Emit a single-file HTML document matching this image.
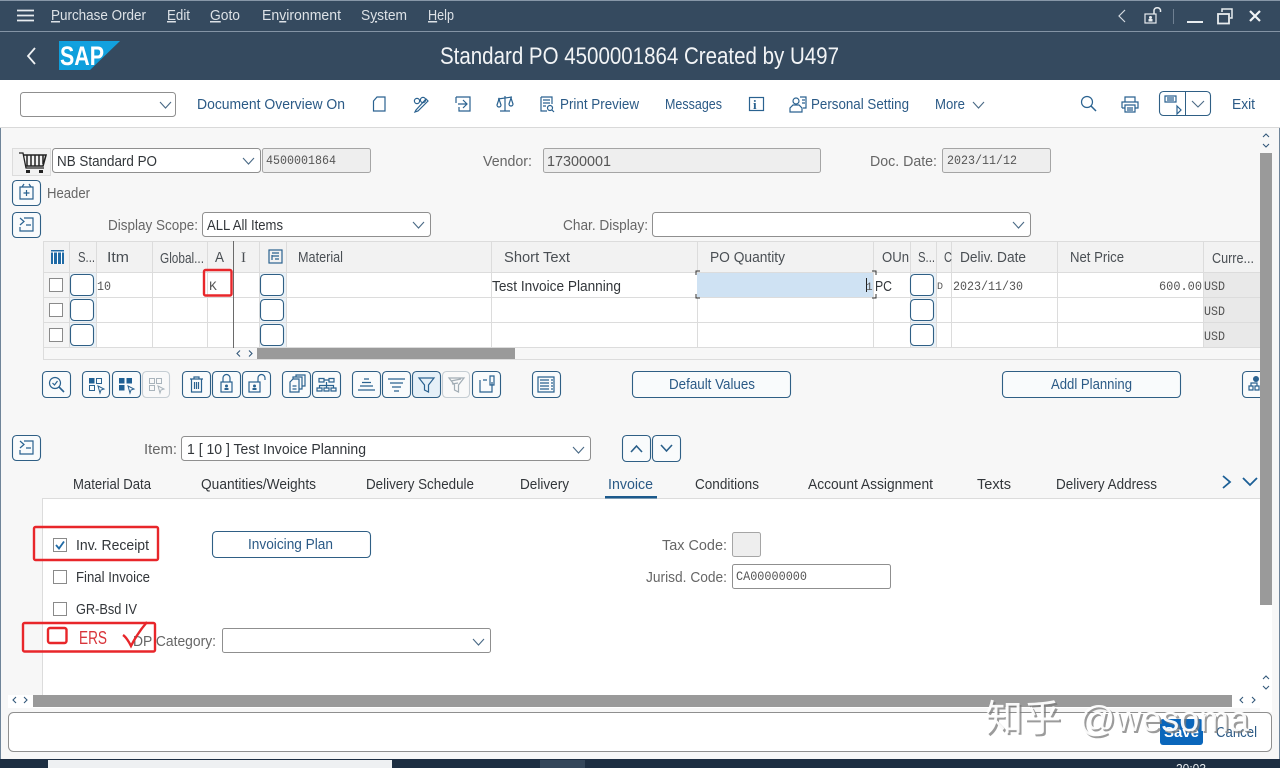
<!DOCTYPE html>
<html><head><meta charset="utf-8"><title>Standard PO</title>
<style>
html,body{margin:0;padding:0;background:#f7f7f7;overflow:hidden}
svg{display:block;position:absolute;left:0;top:0}
text{font-family:"Liberation Sans","Noto Sans CJK SC",sans-serif;font-size:15px;fill:#32363a}
.m{fill:#dde2e7}
.b{fill:#2b5a86}
.l{fill:#666}
.h{fill:#4a4f54}
.c{font-family:"Liberation Mono",monospace;font-size:13px;fill:#555}
.btn{fill:#fff;stroke:#2f5f85;stroke-width:1.1}
.bt2{fill:#f9fbfc;stroke:#2f5f85;stroke-width:1.1}
.dis{fill:#f9f9f9;stroke:#c5cdd3;stroke-width:1.1}
.dd{fill:#fff;stroke:#8f8f8f;stroke-width:1}
.ro{fill:#eeeeee;stroke:#a5a5a5;stroke-width:1}
.ck{fill:#fff;stroke:#8a8a8a;stroke-width:1}
.i{fill:none;stroke:#2a6290;stroke-width:1.2}
.chev{fill:none;stroke:#4a6a86;stroke-width:1.1}
.red{fill:none;stroke:#e8262a;stroke-width:2.4}
.grid{stroke:#dcdcdc;stroke-width:1}
.ar{fill:none;stroke:#33587a;stroke-width:1.1}
</style></head><body>
<svg width="1280" height="768" viewBox="0 0 1280 768" xmlns="http://www.w3.org/2000/svg">
<rect width="1280" height="768" fill="#f7f7f7"/>
<!-- shell -->
<rect width="1280" height="80" fill="#354a5f"/>
<rect width="1280" height="1" fill="#8797a8"/>
<rect y="31" width="1280" height="1" fill="#8494a5"/>
<rect x="0" y="80" width="1" height="680" fill="#6f8499"/>
<rect x="1279" y="80" width="1" height="680" fill="#6f8499"/>
<path d="M17 10.500H34M17 15.500H34M17 20.500H34" stroke="#e8ecef" stroke-width="1.800" fill="none"/>
<text class="m" x="51" y="20" textLength="95" lengthAdjust="spacingAndGlyphs"><tspan style="text-decoration:underline">P</tspan>urchase Order</text>
<text class="m" x="167" y="20" textLength="23" lengthAdjust="spacingAndGlyphs"><tspan style="text-decoration:underline">E</tspan>dit</text>
<text class="m" x="210" y="20" textLength="30" lengthAdjust="spacingAndGlyphs"><tspan style="text-decoration:underline">G</tspan>oto</text>
<text class="m" x="262" y="20" textLength="79" lengthAdjust="spacingAndGlyphs">En<tspan style="text-decoration:underline">v</tspan>ironment</text>
<text class="m" x="361" y="20" textLength="46" lengthAdjust="spacingAndGlyphs">S<tspan style="text-decoration:underline">y</tspan>stem</text>
<text class="m" x="428" y="20" textLength="26" lengthAdjust="spacingAndGlyphs"><tspan style="text-decoration:underline">H</tspan>elp</text>
<!-- window icons -->
<path d="M1125 10L1119 16L1125 22" fill="none" stroke="#d5dbe1" stroke-width="1.200"/>
<rect x="1145" y="14" width="11" height="9" fill="none" stroke="#e8ecef" stroke-width="1.200"/>
<circle cx="1150.500" cy="17.500" r="1.500" fill="#e8ecef"/><rect x="1148.500" y="19" width="4" height="2.500" fill="#e8ecef"/>
<path d="M1154 14V10A3.500 3.500 0 0 1 1160.500 10V12" fill="none" stroke="#e8ecef" stroke-width="1.500"/>
<rect x="1173" y="9" width="1" height="15" fill="#6f8092"/>
<rect x="1187" y="21" width="16" height="2" fill="#e8ecef"/>
<rect x="1218" y="14" width="11" height="9.500" fill="none" stroke="#e8ecef" stroke-width="1.800"/>
<path d="M1222 12V9H1232V18H1230" fill="none" stroke="#e8ecef" stroke-width="1.500"/>
<path d="M1250 11L1260 21M1260 11L1250 21" stroke="#f2f4f6" stroke-width="2.200" fill="none"/>
<!-- title bar -->
<path d="M35 48L28 56L35 64" fill="none" stroke="#f0f2f4" stroke-width="1.800"/>
<path d="M59 41H120L90 70H59Z" fill="#0f9fdc"/>
<path d="M59 41H120L104 56L59 41Z" fill="#17a6e3" opacity=".4"/>
<text x="60" y="65" textLength="44" lengthAdjust="spacingAndGlyphs" style="font-size:27px;font-weight:700;fill:#fff">SAP</text>
<text x="440" y="64" textLength="399" lengthAdjust="spacingAndGlyphs" style="font-size:24px;fill:#f2f4f6">Standard PO 4500001864 Created by U497</text>
<!-- toolbar -->
<rect y="80" width="1280" height="47" fill="#fff"/>
<rect y="127" width="1280" height="1" fill="#d9d9d9"/>
<rect x="20.500" y="92.500" width="155" height="24" rx="3" class="dd"/>
<path class="chev" d="M160 102L165.500 108L171 102"/>
<text class="b" x="197" y="109" textLength="148" lengthAdjust="spacingAndGlyphs">Document Overview On</text>
<path class="i" d="M373.500 101L377 97H385V111H373.500Z" stroke-width="1.500"/>
<g class="i"><circle cx="417" cy="101" r="2.600"/><circle cx="423" cy="100" r="2.600"/><path d="M416 110L426 99L428 101L418 111L415 112Z"/></g>
<g class="i"><path d="M456 97H470V111H459V107M456 97V103"/><path d="M458 104H467M463 100L467 104L463 108"/></g>
<g class="i"><path d="M505 96V111M500 111H510M498 99L512 97"/><path d="M497 105L499 99L501 105A2 2 0 0 1 497 105ZM509 104L511 98L513 104A2 2 0 0 1 509 104Z"/></g>
<g class="i"><path d="M541 97H552V104M541 97V111H547M543 100H550M543 103H550M543 106H546"/><circle cx="550" cy="108" r="2.500"/><path d="M552 110L554 112"/></g>
<text class="b" x="560" y="109" textLength="79" lengthAdjust="spacingAndGlyphs">Print Preview</text>
<text class="b" x="665" y="109" textLength="57" lengthAdjust="spacingAndGlyphs">Messages</text>
<rect x="749.500" y="97.500" width="14" height="13" class="i"/>
<text x="753" y="109" style="font-family:'Liberation Serif',serif;font-size:13px;font-weight:700;fill:#2a6290">i</text>
<g class="i"><circle cx="796" cy="101" r="3"/><path d="M790 112V108L793 105H799L802 108V112ZM800 97H806V108H803"/><path d="M802 100H805M802 103H805"/></g>
<text class="b" x="811" y="109" textLength="98" lengthAdjust="spacingAndGlyphs">Personal Setting</text>
<text class="b" x="935" y="109" textLength="30" lengthAdjust="spacingAndGlyphs">More</text>
<path class="chev" d="M973 102L978.500 108L984 102"/>
<g class="i"><circle cx="1087" cy="102" r="5.500"/><path d="M1091 106L1096 111" stroke-width="1.500"/></g>
<g class="i"><path d="M1125 102V97H1135V102M1122 108V102H1138V108H1135M1125 108H1122"/><path d="M1125 105H1135V112H1125ZM1127 108H1133M1127 110H1133"/></g>
<rect x="1159.500" y="91.500" width="51" height="24" rx="4" class="btn"/>
<path d="M1185.500 92V115" stroke="#2f5f85"/>
<g class="i"><path d="M1165 96H1176V102H1165ZM1167 98H1174M1167 100H1174"/><path d="M1177 106L1181 110L1177 114Z" stroke="#2a6290"/></g>
<path class="chev" d="M1192 101L1198 107L1204 101"/>
<text class="b" x="1232" y="109" textLength="23" lengthAdjust="spacingAndGlyphs">Exit</text>
<!-- header row -->
<rect x="12.500" y="148.500" width="38" height="27" fill="#f2f2f2" stroke="#dcdcdc"/>
<g fill="none" stroke="#222" stroke-width="1.300"><path d="M19 153H23L26 168H44"/><path d="M23 155H46L43 166H26" stroke-width="1.600"/><path d="M27 155V166M31 155V166M35 155V166M39 155V166M43 155V164" stroke-width="1.500"/></g>
<rect x="26" y="170" width="4" height="3" fill="#222"/><rect x="39" y="170" width="4" height="3" fill="#222"/>
<rect x="52.500" y="148.500" width="208" height="24" rx="3" class="dd"/>
<text x="57" y="166" textLength="100" lengthAdjust="spacingAndGlyphs">NB Standard PO</text>
<path class="chev" d="M243 158L248.500 164L254 158"/>
<rect x="262.500" y="148.500" width="108" height="24" rx="2" class="ro"/>
<text class="c" x="266" y="164" textLength="70" lengthAdjust="spacingAndGlyphs">4500001864</text>
<text class="l" x="483" y="166" textLength="49" lengthAdjust="spacingAndGlyphs">Vendor:</text>
<rect x="543.500" y="148.500" width="277" height="24" rx="2" class="ro"/>
<text class="c" x="547" y="166" textLength="64" lengthAdjust="spacingAndGlyphs" style="font-family:'Liberation Sans',sans-serif;font-size:15px">17300001</text>
<text class="l" x="870" y="166" textLength="67" lengthAdjust="spacingAndGlyphs">Doc. Date:</text>
<rect x="942.500" y="148.500" width="108" height="24" rx="2" class="ro"/>
<text class="c" x="947" y="164" textLength="70" lengthAdjust="spacingAndGlyphs">2023/11/12</text>
<!-- header buttons -->
<rect x="12.500" y="180.500" width="28" height="25" rx="4" class="bt2"/>
<g class="i"><path d="M20 187H33V199H20ZM26.500 190V196M23.500 193H29.500M22 187L24 184M31 187L29 184"/></g>
<text class="l" x="47" y="198" textLength="43" lengthAdjust="spacingAndGlyphs">Header</text>
<rect x="12.500" y="212.500" width="28" height="25" rx="4" class="bt2"/>
<g class="i"><path d="M20 218L24 221.500L20 225M24 218H33V231H20V227M26 225H31"/></g>
<text class="l" x="108" y="230" textLength="90" lengthAdjust="spacingAndGlyphs">Display Scope:</text>
<rect x="202.500" y="212.500" width="228" height="24" rx="3" class="dd"/>
<text x="207" y="230" textLength="76" lengthAdjust="spacingAndGlyphs">ALL All Items</text>
<path class="chev" d="M413 222L418.500 228L424 222"/>
<text class="l" x="563" y="230" textLength="85" lengthAdjust="spacingAndGlyphs">Char. Display:</text>
<rect x="652.500" y="212.500" width="378" height="24" rx="3" class="dd"/>
<path class="chev" d="M1013 222L1018.500 228L1024 222"/>
<!-- right scrollbar -->
<path class="ar" d="M1263 137L1266 134L1269 137M1263 144L1266 147L1269 144"/>
<rect x="1260" y="153" width="12" height="452" fill="#9a9a9a"/>
<!-- table -->
<rect x="43" y="241" width="1217" height="119" fill="#fff"/>
<rect x="43" y="241" width="1217" height="31" fill="#f2f2f2"/>
<rect x="43" y="273" width="26" height="75" fill="#f5f5f5"/>
<rect x="70" y="273" width="26" height="75" fill="#eaf2f8"/>
<rect x="260" y="273" width="26" height="75" fill="#eaf2f8"/>
<rect x="910" y="273" width="26" height="75" fill="#eaf2f8"/>
<rect x="1203" y="273" width="57" height="75" fill="#e9e9e9"/>
<rect x="43" y="348" width="1217" height="12" fill="#f7f7f7"/>
<path class="grid" d="M43 272.500H1260M43 297.500H1260M43 322.500H1260M43 347.500H1260M43 359.500H1260M43 241.500H1260M43.500 241V359"/>
<path class="grid" d="M69.500 241V348M96.500 241V348M152.500 241V348M207.500 241V348M259.500 241V348M286.500 241V348M491.500 241V348M697.500 241V348M873.500 241V348M910.500 241V348M936.500 241V348M951.500 241V348M1057.500 241V348M1203.500 241V348"/>
<rect x="233" y="241" width="1" height="107" fill="#6a6a6a"/>
<g><rect x="51" y="250" width="13" height="14" fill="#1f6aa5"/><path d="M53.500 252V264M57.500 252V264M61.500 252V264" stroke="#fff" stroke-width="1"/><rect x="51" y="251.500" width="13" height="1" fill="#fff"/></g>
<text class="h" x="78" y="262" textLength="17" lengthAdjust="spacingAndGlyphs">S...</text>
<text class="h" x="107" y="262" textLength="22" lengthAdjust="spacingAndGlyphs">Itm</text>
<text class="h" x="160" y="263" textLength="44" lengthAdjust="spacingAndGlyphs">Global...</text>
<text class="h" x="215" y="262" textLength="9" lengthAdjust="spacingAndGlyphs">A</text>
<text class="h" x="241" y="262" textLength="5" lengthAdjust="spacingAndGlyphs" style="font-family:'Liberation Serif',serif">I</text>
<g class="i"><rect x="269" y="250" width="13" height="13"/><path d="M272 253H279M272 256H279M275 259H279M272 255V260"/></g>
<text class="h" x="298" y="262" textLength="45" lengthAdjust="spacingAndGlyphs">Material</text>
<text class="h" x="504" y="262" textLength="66" lengthAdjust="spacingAndGlyphs">Short Text</text>
<text class="h" x="710" y="262" textLength="75" lengthAdjust="spacingAndGlyphs">PO Quantity</text>
<text class="h" x="882" y="262" textLength="27" lengthAdjust="spacingAndGlyphs">OUn</text>
<text class="h" x="918" y="262" textLength="17" lengthAdjust="spacingAndGlyphs">S...</text>
<text class="h" x="944" y="262" textLength="8" lengthAdjust="spacingAndGlyphs">C</text>
<text class="h" x="960" y="262" textLength="66" lengthAdjust="spacingAndGlyphs">Deliv. Date</text>
<text class="h" x="1070" y="262" textLength="54" lengthAdjust="spacingAndGlyphs">Net Price</text>
<text class="h" x="1212" y="263" textLength="42" lengthAdjust="spacingAndGlyphs">Curre...</text>
<!-- rows -->
<rect x="49.500" y="278.500" width="13" height="13" class="ck"/><rect x="49.500" y="303.500" width="13" height="13" class="ck"/><rect x="49.500" y="328.500" width="13" height="13" class="ck"/>
<rect x="70.500" y="274.500" width="23" height="21" rx="4" class="btn"/><rect x="70.500" y="299.500" width="23" height="21" rx="4" class="btn"/><rect x="70.500" y="324.500" width="23" height="21" rx="4" class="btn"/>
<rect x="260.500" y="274.500" width="23" height="21" rx="4" class="btn"/><rect x="260.500" y="299.500" width="23" height="21" rx="4" class="btn"/><rect x="260.500" y="324.500" width="23" height="21" rx="4" class="btn"/>
<rect x="910.500" y="274.500" width="23" height="21" rx="4" class="btn"/><rect x="910.500" y="299.500" width="23" height="21" rx="4" class="btn"/><rect x="910.500" y="324.500" width="23" height="21" rx="4" class="btn"/>
<text class="c" x="97" y="290" textLength="14" lengthAdjust="spacingAndGlyphs">10</text>
<text class="c" x="209" y="290">K</text>
<rect x="204" y="270" width="27.500" height="25.500" rx="1.500" class="red"/>
<text x="492" y="291" textLength="129" lengthAdjust="spacingAndGlyphs">Test Invoice Planning</text>
<rect x="697" y="273" width="176" height="24" fill="#cfe2f3"/>
<path d="M700 271H696V275M872 271H876V275M700 298H696V294M872 298H876V294" fill="none" stroke="#333" stroke-width="1"/>
<rect x="866" y="278" width="1" height="14" fill="#222"/><text class="c" x="866" y="290" style="font-size:11px">1</text>
<text x="875" y="291" textLength="17" lengthAdjust="spacingAndGlyphs">PC</text>
<text class="c" x="937" y="289" style="font-size:10px">D</text>
<text class="c" x="953" y="290" textLength="70" lengthAdjust="spacingAndGlyphs">2023/11/30</text>
<text class="c" x="1159" y="290" textLength="43" lengthAdjust="spacingAndGlyphs">600.00</text>
<text class="c" x="1204" y="290" textLength="21" lengthAdjust="spacingAndGlyphs">USD</text>
<text class="c" x="1204" y="315" textLength="21" lengthAdjust="spacingAndGlyphs">USD</text>
<text class="c" x="1204" y="340" textLength="21" lengthAdjust="spacingAndGlyphs">USD</text>
<path class="ar" d="M240 350.500L237 353.500L240 356.500M249 350.500L252 353.500L249 356.500"/>
<rect x="257" y="348" width="258" height="11" fill="#9a9a9a"/>
<!-- button row -->
<rect x="42.500" y="371.500" width="28" height="26" rx="4" class="bt2"/>
<g class="i"><circle cx="55" cy="383" r="5.500"/><path d="M59 387L64 392" stroke-width="1.600"/><path d="M52.500 383L54.500 385L57.500 381"/></g>
<rect x="82.500" y="371.500" width="27" height="26" rx="4" class="bt2"/>
<g><rect x="89" y="378" width="5.500" height="5.500" fill="#1f5f93"/><rect x="96.500" y="378.500" width="5" height="5" fill="none" stroke="#2a6290"/><rect x="89.500" y="385.500" width="5" height="5" fill="none" stroke="#2a6290"/><path d="M98 386L104 389L101 390L100 393Z" fill="#fff" stroke="#2a6290"/></g>
<rect x="112.500" y="371.500" width="28" height="26" rx="4" class="bt2"/>
<g><rect x="119" y="378" width="5.500" height="5.500" fill="#1f5f93"/><rect x="126.500" y="378" width="5.500" height="5.500" fill="#1f5f93"/><rect x="119" y="385" width="5.500" height="5.500" fill="#1f5f93"/><path d="M128 386L134 389L131 390L130 393Z" fill="#fff" stroke="#2a6290"/></g>
<rect x="142.500" y="371.500" width="27" height="26" rx="4" class="dis"/>
<g fill="none" stroke="#a9b4bc"><rect x="149.500" y="378.500" width="5" height="5"/><rect x="156.500" y="378.500" width="5" height="5"/><rect x="149.500" y="385.500" width="5" height="5"/><path d="M158 386L164 389L161 390L160 393Z"/></g>
<rect x="182.500" y="371.500" width="28" height="26" rx="4" class="bt2"/>
<g class="i"><path d="M190 379H203M194 379V377H199V379M191.500 379V392H201.500V379M194.500 382V389M196.500 382V389M198.500 382V389"/></g>
<rect x="212.500" y="371.500" width="28" height="26" rx="4" class="bt2"/>
<g class="i" stroke-width="1.500"><rect x="221" y="382" width="11" height="10"/><path d="M223 382V378A3.500 3.500 0 0 1 230 378V382"/></g><circle cx="226.500" cy="386" r="1.500" fill="#2a6290"/><rect x="224.500" y="388" width="4" height="2" fill="#2a6290"/>
<rect x="242.500" y="371.500" width="28" height="26" rx="4" class="bt2"/>
<g class="i" stroke-width="1.500"><rect x="249" y="382" width="11" height="10"/><path d="M258 382V378A3.500 3.500 0 0 1 265 378V380"/></g><circle cx="254.500" cy="386" r="1.500" fill="#2a6290"/><rect x="252.500" y="388" width="4" height="2" fill="#2a6290"/>
<rect x="282.500" y="371.500" width="28" height="26" rx="4" class="bt2"/>
<g class="i"><path d="M290 382L293 379H299V392H290ZM292.500 386H296.500M292.500 389H296.500M293 379V377H302V389H299M296 377V375H305V386H302"/></g>
<rect x="312.500" y="371.500" width="28" height="26" rx="4" class="bt2"/>
<g class="i"><path d="M319 378.500H324V382H319ZM329 378.500H334V382H329ZM324 380H329M317 388H322V391H317ZM324 388H329V391H324ZM331 388H336V391H331ZM319.500 388V385.500H333.500V388M326.500 382V388"/></g>
<rect x="352.500" y="371.500" width="28" height="26" rx="4" class="bt2"/>
<path class="i" d="M364 379H369M362 382.500H371M360 386H373M358 390H375"/>
<rect x="382.500" y="371.500" width="28" height="26" rx="4" class="bt2"/>
<path class="i" d="M388 379H405M390 383H403M392 387H401M394 391H399"/>
<rect x="412.500" y="371.500" width="28" height="26" rx="4" fill="#e5f0f8" stroke="#2f5f85" stroke-width="1.100"/>
<path class="i" d="M419 378H434L428.500 385V392L424.500 390V385Z"/>
<rect x="442.500" y="371.500" width="27" height="26" rx="4" class="dis"/>
<path d="M449 378H464L458.500 385V392L454.500 390V385Z M451 381L461 379M452 384L458 383" fill="none" stroke="#a2adb5" stroke-width="1.200"/>
<rect x="472.500" y="371.500" width="28" height="26" rx="4" class="bt2"/>
<path class="i" d="M480 380V392H492V382M483 380H487M490 376H494V385H490Z"/>
<rect x="532.500" y="371.500" width="28" height="26" rx="4" class="bt2"/>
<path class="i" d="M538 377H554V392H538ZM540 380H549M540 383H549M540 386H549M540 389H549M551 380H553M551 383H553M551 386H553M551 389H553" stroke-width="1"/>
<rect x="632.500" y="371.500" width="158" height="26" rx="4" class="bt2"/>
<text class="b" x="669" y="389" textLength="86" lengthAdjust="spacingAndGlyphs">Default Values</text>
<rect x="1002.500" y="371.500" width="178" height="26" rx="4" class="bt2"/>
<text class="b" x="1051" y="389" textLength="81" lengthAdjust="spacingAndGlyphs">Addl Planning</text>
<rect x="1242.500" y="371.500" width="24" height="26" rx="4" class="bt2"/>
<path class="i" d="M1249 390H1253V386H1249ZM1255 390H1259V386H1255ZM1251 386V383H1257V386"/><circle cx="1256" cy="379" r="3" fill="#2a6290"/>
<rect x="1260" y="360" width="12" height="50" fill="#9a9a9a"/>
<!-- item row -->
<rect x="12.500" y="435.500" width="28" height="25" rx="4" class="bt2"/>
<g class="i"><path d="M20 441L24 444.500L20 448M24 441H33V454H20V450M26 448H31"/></g>
<text class="l" x="144" y="454" textLength="33" lengthAdjust="spacingAndGlyphs">Item:</text>
<rect x="181.500" y="436.500" width="409" height="24" rx="3" class="dd"/>
<text x="187" y="454" textLength="179" lengthAdjust="spacingAndGlyphs">1 [ 10 ] Test Invoice Planning</text>
<path class="chev" d="M573 447L578.500 453L584 447"/>
<rect x="622.500" y="435.500" width="28" height="26" rx="4" class="bt2"/><path d="M631 452L636.500 446L642 452" fill="none" stroke="#2a5f8a" stroke-width="1.600"/>
<rect x="652.500" y="435.500" width="28" height="26" rx="4" class="bt2"/><path d="M661 445L666.500 451L672 445" fill="none" stroke="#2a5f8a" stroke-width="1.600"/>
<!-- tabs -->
<text x="73" y="489" textLength="78" lengthAdjust="spacingAndGlyphs">Material Data</text>
<text x="201" y="489" textLength="115" lengthAdjust="spacingAndGlyphs">Quantities/Weights</text>
<text x="366" y="489" textLength="108" lengthAdjust="spacingAndGlyphs">Delivery Schedule</text>
<text x="520" y="489" textLength="49" lengthAdjust="spacingAndGlyphs">Delivery</text>
<text class="b" x="608" y="489" textLength="45" lengthAdjust="spacingAndGlyphs">Invoice</text>
<text x="695" y="489" textLength="64" lengthAdjust="spacingAndGlyphs">Conditions</text>
<text x="808" y="489" textLength="125" lengthAdjust="spacingAndGlyphs">Account Assignment</text>
<text x="977" y="489" textLength="34" lengthAdjust="spacingAndGlyphs">Texts</text>
<text x="1056" y="489" textLength="101" lengthAdjust="spacingAndGlyphs">Delivery Address</text>
<path d="M1223 476L1230 482L1223 488M1243 478L1250 485L1257 478" fill="none" stroke="#1c5f96" stroke-width="1.800"/>
<!-- tab panel -->
<rect x="42" y="498" width="1218" height="197" fill="#fff"/>
<rect x="1260" y="605" width="12" height="107" fill="#fff"/>
<rect x="42" y="498" width="1218" height="1" fill="#dcdcdc"/>
<rect x="42" y="498" width="1" height="197" fill="#dcdcdc"/>
<rect x="605" y="496" width="52" height="2.500" fill="#1c5a8c"/>
<rect x="1260" y="410" width="12" height="195" fill="#9a9a9a"/>
<!-- form -->
<rect x="53.500" y="538.500" width="13" height="13" class="ck"/>
<path d="M56 545L59 548.500L64 541.500" fill="none" stroke="#1f6aa5" stroke-width="1.800"/>
<text x="76" y="550" textLength="73" lengthAdjust="spacingAndGlyphs">Inv. Receipt</text>
<rect x="34" y="527" width="124" height="33" rx="1.500" class="red"/>
<rect x="212.500" y="531.500" width="158" height="26" rx="4" class="btn"/>
<text class="b" x="248" y="549" textLength="85" lengthAdjust="spacingAndGlyphs">Invoicing Plan</text>
<rect x="53.500" y="570.500" width="13" height="13" class="ck"/>
<text x="76" y="582" textLength="74" lengthAdjust="spacingAndGlyphs">Final Invoice</text>
<rect x="53.500" y="602.500" width="13" height="13" class="ck"/>
<text x="76" y="614" textLength="61" lengthAdjust="spacingAndGlyphs">GR-Bsd IV</text>
<text class="l" x="133" y="646" textLength="83" lengthAdjust="spacingAndGlyphs">DP Category:</text>
<rect x="23" y="623" width="132" height="28.500" rx="1.500" class="red"/>
<rect x="48" y="628" width="18.500" height="15" rx="2" class="red"/>
<text x="79" y="644" textLength="28" lengthAdjust="spacingAndGlyphs" style="font-size:18px;fill:#d8343a">ERS</text>
<path d="M123 635C126 637 129 642 131 646C135 638 141 629 147 622" fill="none" stroke="#e8262a" stroke-width="2.400"/>
<rect x="222.500" y="628.500" width="268" height="24" rx="2" class="dd"/>
<path class="chev" d="M473 639L478.500 645L484 639"/>
<text class="l" x="662" y="550" textLength="65" lengthAdjust="spacingAndGlyphs">Tax Code:</text>
<rect x="732.500" y="532.500" width="28" height="24" rx="2" class="ro"/>
<text class="l" x="646" y="582" textLength="81" lengthAdjust="spacingAndGlyphs">Jurisd. Code:</text>
<rect x="732.500" y="564.500" width="158" height="24" rx="2" fill="#fff" stroke="#8f8f8f"/>
<text class="c" x="736" y="580" textLength="71" lengthAdjust="spacingAndGlyphs">CA00000000</text>
<path class="ar" d="M1263 679L1266 676L1269 679M1263 686L1266 689L1269 686"/>
<!-- bottom scrollbar -->
<rect x="8" y="695" width="1252" height="13" fill="#fff"/>
<path class="ar" d="M16 697L13 700L16 703M24 697L27 700L24 703M1243 697L1240 700L1243 703M1252 697L1255 700L1252 703"/>
<rect x="33" y="695" width="1199" height="12" fill="#9a9a9a"/>
<!-- footer panel -->
<rect x="8.500" y="712.500" width="1263" height="39" rx="5" fill="#fff" stroke="#8f8f8f"/>
<rect x="1160" y="719" width="43" height="26" rx="3" fill="#0a66bb"/>
<text x="1164" y="737" textLength="35" lengthAdjust="spacingAndGlyphs" style="font-weight:700;fill:#fff">Save</text>
<text class="b" x="1216" y="737" textLength="41" lengthAdjust="spacingAndGlyphs">Cancel</text>
<!-- taskbar -->
<rect y="759" width="1280" height="9" fill="#1d2e42"/>
<rect x="48" y="760" width="344" height="8" fill="#eef0f2"/>
<rect x="540" y="760" width="45" height="8" fill="#34465a"/>
<text x="1176" y="773" textLength="30" lengthAdjust="spacingAndGlyphs" style="font-size:13px;fill:#e8ecef">20:03</text>
<!-- watermark -->
<text x="987" y="733" textLength="76" lengthAdjust="spacingAndGlyphs" style="font-size:37px;fill:#7a7a7a;opacity:.75">知乎</text>
<text x="985" y="731" textLength="76" lengthAdjust="spacingAndGlyphs" style="font-size:37px;fill:#fff;opacity:.95">知乎</text>
<text x="1081" y="733" textLength="170" lengthAdjust="spacingAndGlyphs" style="font-size:36px;fill:#7a7a7a;opacity:.75">@wesoma</text>
<text x="1079" y="731" textLength="170" lengthAdjust="spacingAndGlyphs" style="font-size:36px;fill:#fff;opacity:.95">@wesoma</text>
</svg>
</body></html>
